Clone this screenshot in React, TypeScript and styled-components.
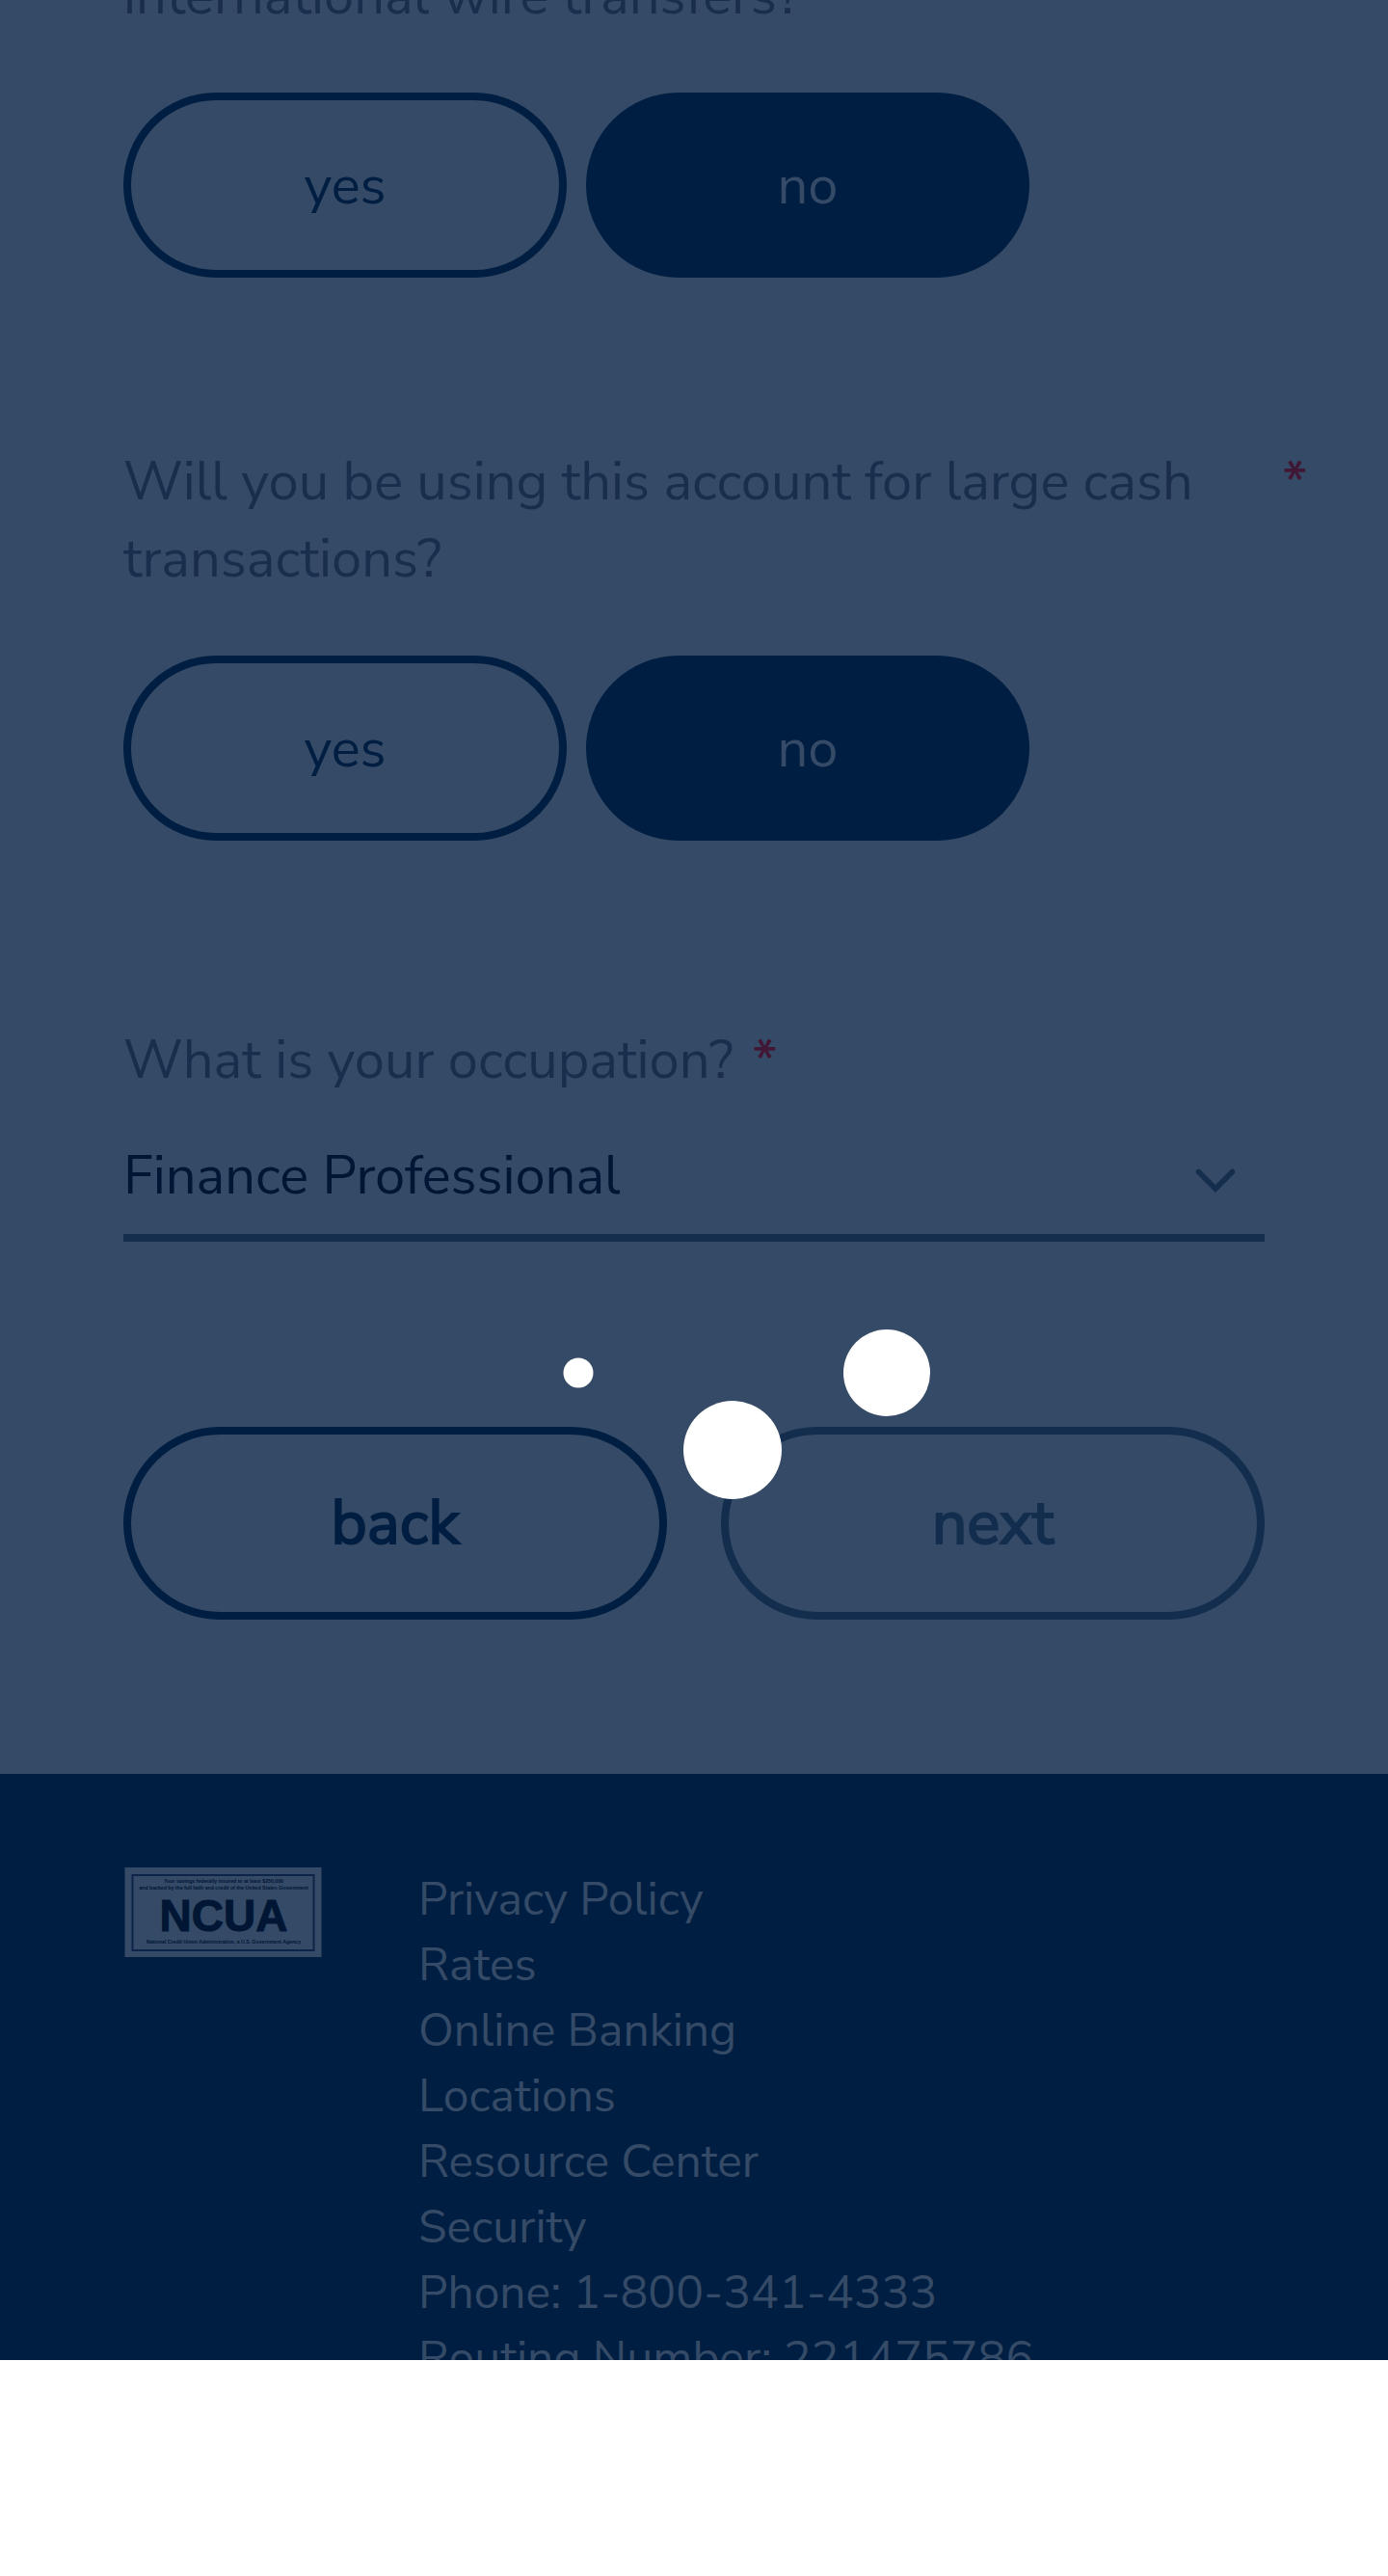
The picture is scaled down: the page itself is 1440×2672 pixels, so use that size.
import React from "react";
import styled, { createGlobalStyle } from "styled-components";

const font = `"Nunito Sans", Nunito, "Open Sans", "Noto Sans", sans-serif`;
const navy = "#001e41";
const slate = "#344a66";

const GlobalStyle = createGlobalStyle`
  * { box-sizing: border-box; }
  html, body { margin: 0; background: #fff; }
  body { font-family: ${font}; }
  button, select { font-family: inherit; }
`;

const Screen = styled.div`
  position: relative;
  height: calc(100vh - 224px);
  overflow: hidden;
  background: ${slate};
`;

const Form = styled.form`
  display: flex;
  flex-direction: column;
  padding: 0 128px 160px;
`;

const Question = styled.fieldset`
  min-width: 0;
  margin: 0 -52px 172px 0;
  padding: 0;
  border: 0;
  &:first-child { margin-top: -44px; }
`;

const Prompt = styled.legend`
  display: flex;
  align-items: flex-start;
  justify-content: space-between;
  width: 100%;
  padding: 0 0 60px;
  color: #192e4c;
  font-size: 56px;
  line-height: 80px;
`;

const PromptText = styled.span`
  max-width: 1160px;
`;

const Required = styled.span`
  color: #401835;
  font-weight: 600;
  padding: 0 8px 0 20px;
`;

const Choices = styled.div`
  display: flex;
  gap: 20px;
`;

const Choice = styled.button<{ $selected?: boolean }>`
  width: 460px;
  height: 192px;
  padding: 0;
  border: 8px solid ${navy};
  border-radius: 96px;
  background: ${(p) => (p.$selected ? navy : "transparent")};
  color: ${(p) => (p.$selected ? slate : navy)};
  font-size: 56px;
`;

const Field = styled.div`
  display: flex;
  flex-direction: column;
  margin-top: 16px;
`;

const FieldLabel = styled.label`
  color: #192e4c;
  font-size: 56px;
  line-height: 80px;
`;

const SelectBox = styled.div`
  display: flex;
  align-items: center;
  height: 148px;
  border-bottom: 8px solid #152e4d;
`;

const Select = styled.select`
  appearance: none;
  flex: 1;
  min-width: 0;
  height: 140px;
  padding: 18px 0 0;
  border: 0;
  background: transparent;
  color: #001634;
  font-size: 56px;
`;

const Chevron = styled.svg`
  width: 44px;
  height: 28px;
  margin: 30px 29px 0 0;
`;

const Actions = styled.div`
  display: grid;
  grid-template-columns: 1fr 1fr;
  gap: 56px;
  margin-top: 192px;
`;

const Action = styled.button<{ $muted?: boolean }>`
  height: 200px;
  padding: 0;
  border: 8px solid;
  border-radius: 100px;
  background: transparent;
  color: ${(p) => (p.$muted ? "#122d4e" : navy)};
  font-size: 64px;
  font-weight: 400;
  -webkit-text-stroke: 2px currentColor;
`;

const Footer = styled.footer`
  display: flex;
  align-items: flex-start;
  gap: 100px;
  padding: 96px 128px;
  background: ${navy};
`;

const Seal = styled.svg`
  flex: none;
  width: 206px;
  height: 94px;
`;

const Links = styled.ul`
  display: flex;
  flex-direction: column;
  margin: 0;
  padding: 0;
  list-style: none;
  color: ${slate};
  font-size: 48px;
  line-height: 68px;
`;

const FooterLink = styled.a`
  color: inherit;
  text-decoration: none;
`;

const Loader = styled.div`
  position: absolute;
  left: 0;
  right: 0;
  top: 1344px;
  display: flex;
  justify-content: center;
`;

const Dots = styled.svg`
  width: 480px;
  height: 240px;
  margin-left: 80px;
`;

const links = ["Privacy Policy", "Rates", "Online Banking", "Locations", "Resource Center", "Security"];

function YesNo({ text, required }: { text: string; required?: boolean }) {
  return (
    <Question>
      <Prompt>
        <PromptText>{text}</PromptText>
        {required && <Required>*</Required>}
      </Prompt>
      <Choices>
        <Choice type="button" aria-pressed={false}>yes</Choice>
        <Choice type="button" aria-pressed $selected>no</Choice>
      </Choices>
    </Question>
  );
}

export default function App() {
  return (
    <>
      <GlobalStyle />
      <Screen>
        <Form>
          <YesNo text="international wire transfers?" />
          <YesNo text="Will you be using this account for large cash transactions?" required />
          <Field>
            <FieldLabel htmlFor="occupation">
              What is your occupation?<Required>*</Required>
            </FieldLabel>
            <SelectBox>
              <Select id="occupation" defaultValue="finance">
                <option value="finance">Finance Professional</option>
              </Select>
              <Chevron viewBox="0 0 44 28" fill="none" aria-hidden="true">
                <path d="M4.5 4.5L22 22L39.5 4.5" stroke="#152e4d" strokeWidth="5.5" strokeLinecap="round" />
              </Chevron>
            </SelectBox>
          </Field>
          <Actions>
            <Action type="button">back</Action>
            <Action type="button" $muted>next</Action>
          </Actions>
        </Form>
        <Footer>
          <Seal viewBox="0 0 206 94" role="img" aria-label="NCUA">
            <rect x="1.5" y="1" width="204" height="93" fill={slate} />
            <rect x="9.5" y="9" width="188" height="78" fill="none" stroke="#0c2448" strokeWidth="2" />
            <g fill="#001634" textAnchor="middle" fontFamily="Liberation Sans, sans-serif" fontWeight="700">
              <text x="104" y="17" fontSize="5.2">Your savings federally insured to at least $250,000</text>
              <text x="104" y="24" fontSize="5.2">and backed by the full faith and credit of the United States Government</text>
              <text x="104" y="67" fontSize="46" stroke="#001634" strokeWidth="1">NCUA</text>
              <text x="104" y="80" fontSize="5.2">National Credit Union Administration, a U.S. Government Agency</text>
            </g>
          </Seal>
          <Links>
            {links.map((l) => (
              <li key={l}><FooterLink href="#">{l}</FooterLink></li>
            ))}
            <li>Phone: 1-800-341-4333</li>
            <li>Routing Number: 221475786</li>
          </Links>
        </Footer>
        <Loader role="status" aria-label="Loading">
          <Dots viewBox="0 0 480 240" fill="#fff">
            <circle cx="80" cy="80" r="15.5" />
            <circle cx="240" cy="160" r="51" />
            <circle cx="400" cy="80" r="45" />
          </Dots>
        </Loader>
      </Screen>
    </>
  );
}
